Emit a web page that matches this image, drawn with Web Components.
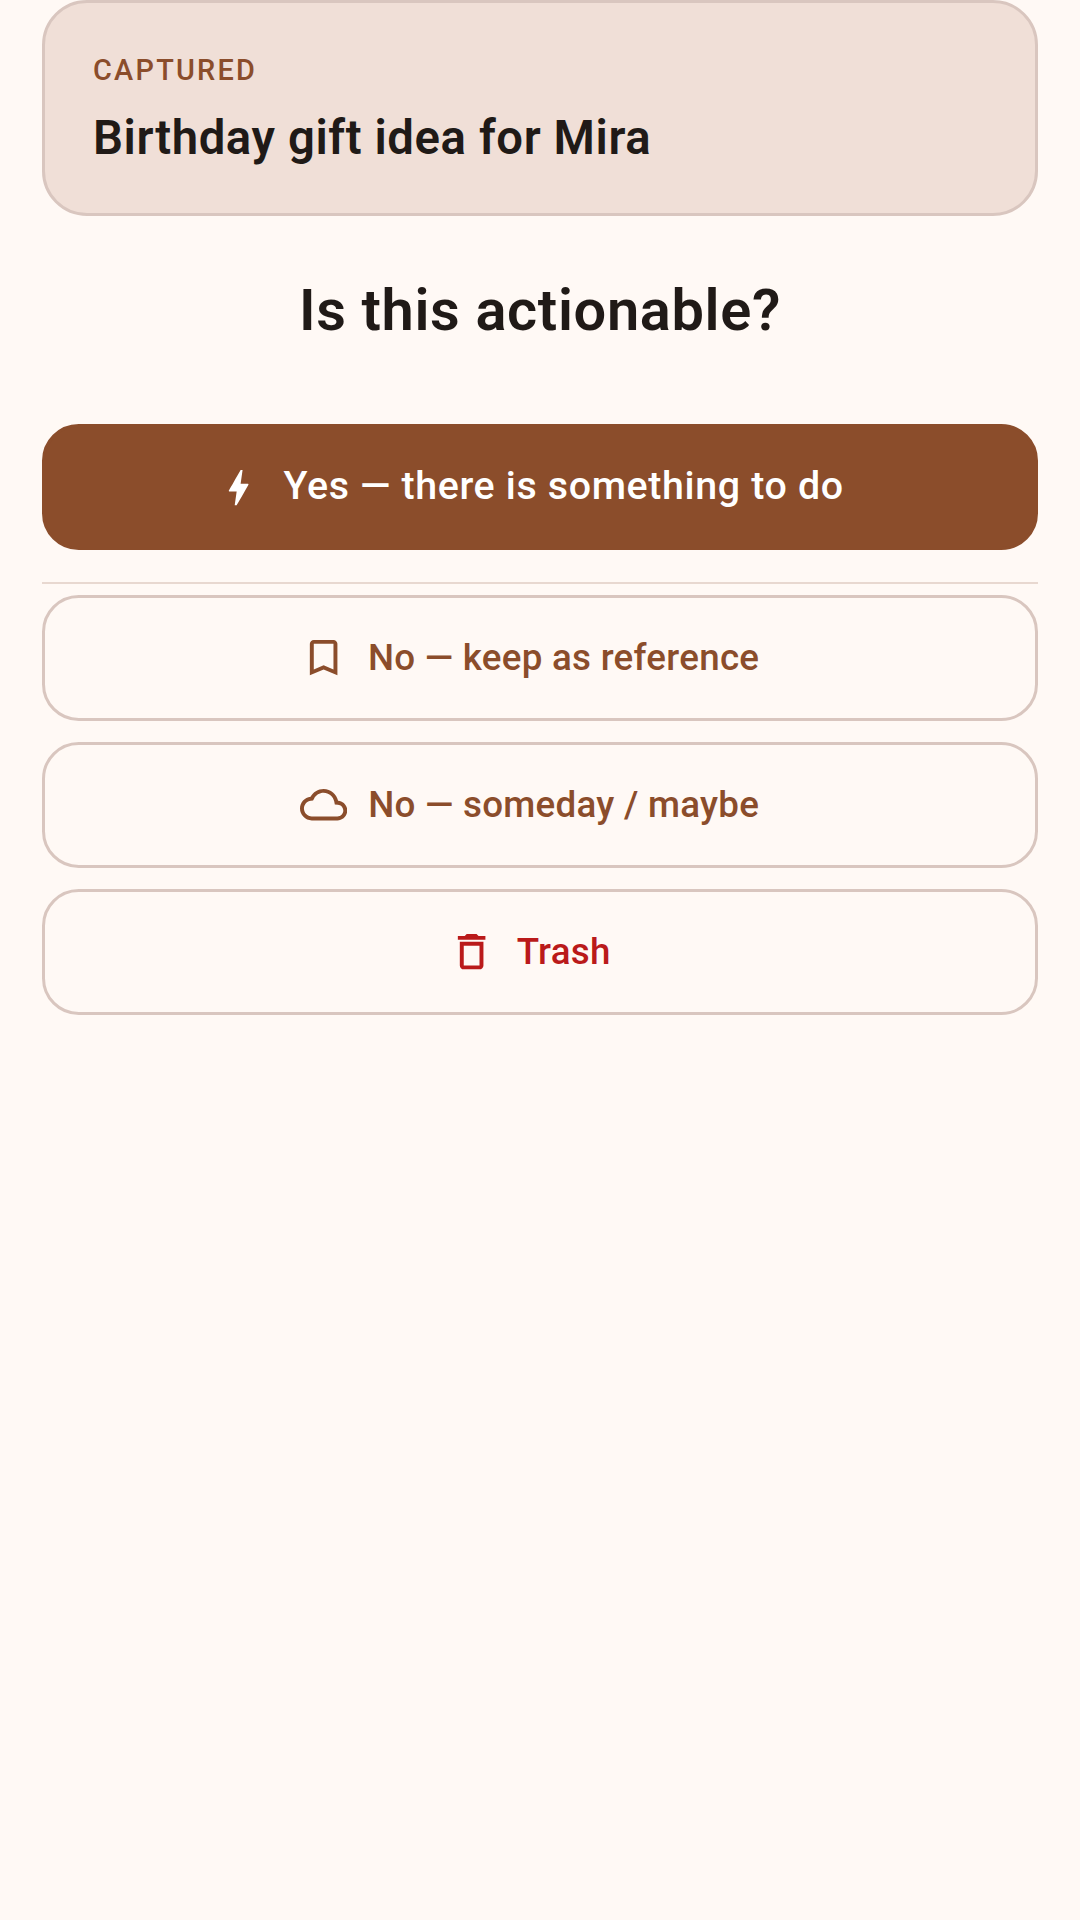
<!DOCTYPE html>
<html><head><meta charset="utf-8"><style>
html,body{margin:0;padding:0;background:#FFF9F5;height:100%;}
body{font-family:Roboto,"Noto Sans",sans-serif;}
</style></head><body>
<triage-screen>
  <capture-card label="CAPTURED">Birthday gift idea for Mira</capture-card>
  <triage-question>Is this actionable?</triage-question>
  <action-button kind="primary" icon="bolt">Yes — there is something to do</action-button>
  <list-divider></list-divider>
  <action-button icon="bookmark">No — keep as reference</action-button>
  <action-button icon="cloud">No — someday / maybe</action-button>
  <action-button kind="danger" icon="trash">Trash</action-button>
</triage-screen>
<script>
const ICONS={
bolt:'M11 21h-1l1-7H7.5c-.88 0-.33-.75-.31-.78C8.48 10.94 10.42 7.54 13.01 3h1l-1 7h3.51c.4 0 .62.19.4.66C12.97 17.55 11 21 11 21z',
bookmark:'M17 3H7c-1.1 0-2 .9-2 2v16l7-3 7 3V5c0-1.1-.9-2-2-2zm0 15l-5-2.18L7 18V5h10v13z',
cloud:'M19.35 10.04C18.67 6.59 15.64 4 12 4 9.11 4 6.6 5.64 5.35 8.04 2.34 8.36 0 10.91 0 14c0 3.31 2.69 6 6 6h13c2.76 0 5-2.24 5-5 0-2.64-2.05-4.78-4.65-4.96zM19 18H6c-2.21 0-4-1.79-4-4 0-2.05 1.53-3.76 3.56-3.97l1.07-.11.5-.95C8.08 7.14 9.94 6 12 6c2.62 0 4.88 1.86 5.39 4.43l.3 1.5 1.53.11c1.56.1 2.78 1.41 2.78 2.96 0 1.65-1.35 3-3 3z',
trash:'M6 19c0 1.1.9 2 2 2h8c1.1 0 2-.9 2-2V7H6v12zM8 9h8v10H8V9zm7.5-5l-1-1h-5l-1 1H5v2h14V4z'};
function def(name,html,init){customElements.define(name,class extends HTMLElement{
  constructor(){super();this.attachShadow({mode:'open'}).innerHTML=html;}
  connectedCallback(){init&&init.call(this);}
});}
def('triage-screen',`<style>:host{display:flex;flex-direction:column;padding:0 42px;box-sizing:border-box}</style><slot></slot>`);
def('capture-card',`<style>:host{display:block;box-sizing:border-box;height:216px;background:#F0DFD7;border:3px solid #D9C6BF;border-radius:45px;padding:50px 48px 0}
#l{font-size:28.875px;line-height:34px;font-weight:500;letter-spacing:2.25px;color:#8B4D2B}
#t{font-size:47.25px;line-height:58px;font-weight:600;letter-spacing:.6px;color:#201A17;margin-top:22px}</style><div id="l"></div><div id="t"><slot></slot></div>`,
function(){this.shadowRoot.getElementById('l').textContent=this.getAttribute('label');});
def('triage-question',`<style>:host{display:block;text-align:center;font-size:57.75px;line-height:72px;font-weight:600;letter-spacing:.65px;color:#201A17;margin:58px 0 78px}</style><slot></slot>`);
def('list-divider',`<style>:host{display:block;height:2px;background:#E8D8D0;margin:32px 0 11px}</style>`);
def('action-button',`<style>:host{display:flex;box-sizing:border-box;height:126px;margin-bottom:21px;padding-right:21px;align-items:center;justify-content:center;gap:21px;border-radius:36.75px;border:3px solid #D9C6BF;color:#8B4D2B;font-size:36.75px;font-weight:500;letter-spacing:.2625px;line-height:1}
:host([kind=primary]){background:#8B4D2B;border-color:#8B4D2B;color:#fff;margin-bottom:0;font-size:39.375px;font-weight:500;letter-spacing:.65px}
:host([kind=danger]){color:#BA1A1A}
svg{width:47.25px;height:47.25px;fill:currentColor;flex:none}
:host([kind=primary]) svg{transform:translateY(1px)}
:host([kind=primary]) span{transform:translateY(-1px)}</style><svg viewBox="0 0 24 24"><path></path></svg><span><slot></slot></span>`,
function(){this.shadowRoot.querySelector('path').setAttribute('d',ICONS[this.getAttribute('icon')]);});
</script></body></html>
